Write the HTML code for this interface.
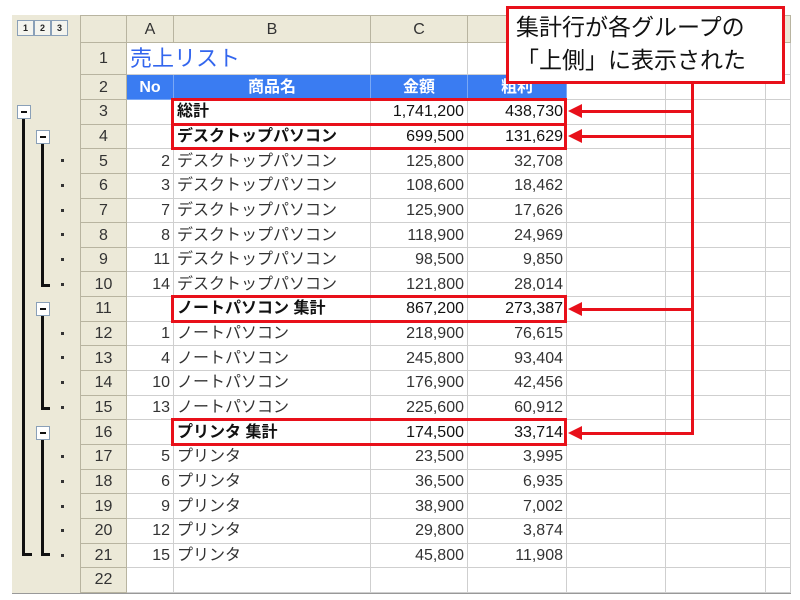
<!DOCTYPE html>
<html><head><meta charset="utf-8"><style>
body{margin:0;width:800px;height:600px;background:#fff;position:relative;overflow:hidden;font-family:"Liberation Sans","Noto Sans CJK JP",sans-serif;}
.frame{position:absolute;left:12px;top:15px;width:777px;height:577px;border:1px solid #999;background:#fff;}
.ol{position:absolute;left:12px;top:15px;width:68px;height:578px;background:#ece9d8;}
table{position:absolute;left:80px;top:15px;border-collapse:collapse;table-layout:fixed;}
td{border:1px solid #cfcfcf;padding:0 3px;font-size:16px;line-height:17px;color:#333;white-space:nowrap;overflow:hidden;}
td.h{background:#ece9d8;text-align:center;border-color:#b8b4a0;color:#333;}
tr.c td{background:#ece9d8;text-align:center;border-color:#b8b4a0;}
td.r{text-align:right}
tr.b td{font-weight:bold;color:#111}
tr.b td.h{font-weight:normal;color:#333}
tr.blue td{background:#3a7cf2;color:#fff;text-align:center;font-weight:bold;border-color:#7aa8f5}
tr.blue td.h{background:#ece9d8;color:#333;font-weight:normal;border-color:#b8b4a0}
.rb{position:absolute;border:3px solid #e8101a;box-sizing:border-box;}
.ln{position:absolute;background:#e8101a;}
.ar{position:absolute;width:0;height:0;border-top:7px solid transparent;border-bottom:7px solid transparent;border-right:14px solid #e8101a;}
.k{position:absolute;background:#111;}
.mb{position:absolute;width:12px;height:12px;border:1px solid #8aa0b8;background:#fff;}
.mb:after{content:"";position:absolute;left:3px;top:5px;width:6px;height:2px;background:#111;}
.dot{position:absolute;width:3px;height:3px;background:#333;}
.lv{position:absolute;top:20px;width:15px;height:14px;border:1px solid #8aa0b8;background:#f4f4ee;font-size:9px;font-weight:bold;text-align:center;line-height:14px;color:#222}
</style></head><body>
<div class="frame"></div>
<div class="ol"></div>
<div class="lv" style="left:17px">1</div><div class="lv" style="left:34px">2</div><div class="lv" style="left:51px">3</div>
<table>
<colgroup><col style="width:46px"><col style="width:47px"><col style="width:197px"><col style="width:97px"><col style="width:99px"><col style="width:99px"><col style="width:100px"><col style="width:25px"></colgroup>
<tr class="c" style="height:27px"><td></td><td>A</td><td>B</td><td>C</td><td>D</td><td></td><td></td><td></td></tr>
<tr style="height:32px"><td class="h">1</td><td colspan="2" style="font-size:22px;line-height:24px;color:#3366ee;overflow:visible">売上リスト</td><td></td><td></td><td></td><td></td><td></td></tr>
<tr class="blue" style="height:25px"><td class="h">2</td><td>No</td><td>商品名</td><td>金額</td><td>粗利</td><td style="background:#fff;border-color:#cfcfcf"></td><td style="background:#fff;border-color:#cfcfcf"></td><td style="background:#fff;border-color:#cfcfcf"></td></tr>
<tr class="b" style="height:24.65px"><td class="h">3</td><td></td><td>総計</td><td class="r" style="font-weight:normal">1,741,200</td><td class="r" style="font-weight:normal">438,730</td><td></td><td></td><td></td></tr>
<tr class="b" style="height:24.65px"><td class="h">4</td><td></td><td>デスクトップパソコン</td><td class="r" style="font-weight:normal">699,500</td><td class="r" style="font-weight:normal">131,629</td><td></td><td></td><td></td></tr>
<tr style="height:24.65px"><td class="h">5</td><td class="r">2</td><td>デスクトップパソコン</td><td class="r">125,800</td><td class="r">32,708</td><td></td><td></td><td></td></tr>
<tr style="height:24.65px"><td class="h">6</td><td class="r">3</td><td>デスクトップパソコン</td><td class="r">108,600</td><td class="r">18,462</td><td></td><td></td><td></td></tr>
<tr style="height:24.65px"><td class="h">7</td><td class="r">7</td><td>デスクトップパソコン</td><td class="r">125,900</td><td class="r">17,626</td><td></td><td></td><td></td></tr>
<tr style="height:24.65px"><td class="h">8</td><td class="r">8</td><td>デスクトップパソコン</td><td class="r">118,900</td><td class="r">24,969</td><td></td><td></td><td></td></tr>
<tr style="height:24.65px"><td class="h">9</td><td class="r">11</td><td>デスクトップパソコン</td><td class="r">98,500</td><td class="r">9,850</td><td></td><td></td><td></td></tr>
<tr style="height:24.65px"><td class="h">10</td><td class="r">14</td><td>デスクトップパソコン</td><td class="r">121,800</td><td class="r">28,014</td><td></td><td></td><td></td></tr>
<tr class="b" style="height:24.65px"><td class="h">11</td><td></td><td>ノートパソコン 集計</td><td class="r" style="font-weight:normal">867,200</td><td class="r" style="font-weight:normal">273,387</td><td></td><td></td><td></td></tr>
<tr style="height:24.65px"><td class="h">12</td><td class="r">1</td><td>ノートパソコン</td><td class="r">218,900</td><td class="r">76,615</td><td></td><td></td><td></td></tr>
<tr style="height:24.65px"><td class="h">13</td><td class="r">4</td><td>ノートパソコン</td><td class="r">245,800</td><td class="r">93,404</td><td></td><td></td><td></td></tr>
<tr style="height:24.65px"><td class="h">14</td><td class="r">10</td><td>ノートパソコン</td><td class="r">176,900</td><td class="r">42,456</td><td></td><td></td><td></td></tr>
<tr style="height:24.65px"><td class="h">15</td><td class="r">13</td><td>ノートパソコン</td><td class="r">225,600</td><td class="r">60,912</td><td></td><td></td><td></td></tr>
<tr class="b" style="height:24.65px"><td class="h">16</td><td></td><td>プリンタ 集計</td><td class="r" style="font-weight:normal">174,500</td><td class="r" style="font-weight:normal">33,714</td><td></td><td></td><td></td></tr>
<tr style="height:24.65px"><td class="h">17</td><td class="r">5</td><td>プリンタ</td><td class="r">23,500</td><td class="r">3,995</td><td></td><td></td><td></td></tr>
<tr style="height:24.65px"><td class="h">18</td><td class="r">6</td><td>プリンタ</td><td class="r">36,500</td><td class="r">6,935</td><td></td><td></td><td></td></tr>
<tr style="height:24.65px"><td class="h">19</td><td class="r">9</td><td>プリンタ</td><td class="r">38,900</td><td class="r">7,002</td><td></td><td></td><td></td></tr>
<tr style="height:24.65px"><td class="h">20</td><td class="r">12</td><td>プリンタ</td><td class="r">29,800</td><td class="r">3,874</td><td></td><td></td><td></td></tr>
<tr style="height:24.65px"><td class="h">21</td><td class="r">15</td><td>プリンタ</td><td class="r">45,800</td><td class="r">11,908</td><td></td><td></td><td></td></tr>
<tr style="height:24.65px"><td class="h">22</td><td></td><td></td><td></td><td></td><td></td><td></td><td></td></tr>
</table>
<div class="mb" style="left:17px;top:105px"></div>
<div class="k" style="left:22px;top:119px;width:3px;height:437px"></div>
<div class="k" style="left:22px;top:553px;width:10px;height:3px"></div>
<div class="mb" style="left:36px;top:130px"></div>
<div class="k" style="left:41px;top:144px;width:3px;height:143px"></div>
<div class="k" style="left:41px;top:284px;width:9px;height:3px"></div>
<div class="mb" style="left:36px;top:302px"></div>
<div class="k" style="left:41px;top:316px;width:3px;height:94px"></div>
<div class="k" style="left:41px;top:407px;width:9px;height:3px"></div>
<div class="mb" style="left:36px;top:426px"></div>
<div class="k" style="left:41px;top:440px;width:3px;height:116px"></div>
<div class="k" style="left:41px;top:553px;width:9px;height:3px"></div>
<div class="dot" style="left:61px;top:159px"></div><div class="dot" style="left:61px;top:184px"></div><div class="dot" style="left:61px;top:209px"></div><div class="dot" style="left:61px;top:233px"></div><div class="dot" style="left:61px;top:258px"></div><div class="dot" style="left:61px;top:283px"></div>
<div class="dot" style="left:61px;top:332px"></div><div class="dot" style="left:61px;top:356px"></div><div class="dot" style="left:61px;top:381px"></div><div class="dot" style="left:61px;top:406px"></div>
<div class="dot" style="left:61px;top:455px"></div><div class="dot" style="left:61px;top:480px"></div><div class="dot" style="left:61px;top:505px"></div><div class="dot" style="left:61px;top:529px"></div><div class="dot" style="left:61px;top:554px"></div>
<div class="rb" style="left:171px;top:98px;width:396px;height:28px"></div>
<div class="rb" style="left:171px;top:123px;width:396px;height:27px"></div>
<div class="rb" style="left:171px;top:295px;width:396px;height:28px"></div>
<div class="rb" style="left:171px;top:418px;width:396px;height:28px"></div>
<div class="ln" style="left:691px;top:82px;width:3px;height:353px"></div>
<div class="ln" style="left:580px;top:110px;width:114px;height:3px"></div><div class="ar" style="left:568px;top:104px"></div>
<div class="ln" style="left:580px;top:135px;width:114px;height:3px"></div><div class="ar" style="left:568px;top:129px"></div>
<div class="ln" style="left:580px;top:308px;width:114px;height:3px"></div><div class="ar" style="left:568px;top:302px"></div>
<div class="ln" style="left:580px;top:432px;width:114px;height:3px"></div><div class="ar" style="left:568px;top:426px"></div>
<div style="position:absolute;left:506px;top:6px;width:266px;height:70px;border:3px solid #e8101a;background:#fff;font-size:23px;line-height:33px;padding:2px 0 0 7px;color:#111;">集計行が各グループの<br>「上側」に表示された</div>
</body></html>
